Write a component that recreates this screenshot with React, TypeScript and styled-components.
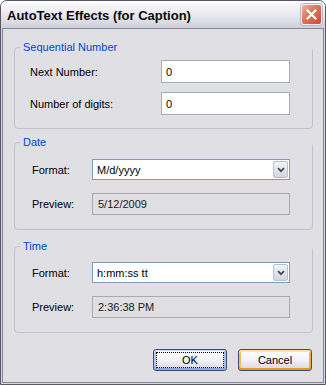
import styled, { createGlobalStyle } from "styled-components";

type GroupProps = {
  top: number;
};
type RowsProps = {
  padLeft: number;
  labelWidth: number;
  padTop: number;
  rowGap: number;
  padBottom: number;
};
type ButtonProps = {
  kind: "default" | "hot";
};

const GlobalStyle = createGlobalStyle`
  html, body {
    margin: 0;
    padding: 0;
    background: #ffffff;
  }
  body {
    font-family: "Liberation Sans", Arial, sans-serif;
    font-size: 11px;
  }
`;

const Window = styled.div`
  width: 326px;
  height: 385px;
  box-sizing: border-box;
  border: 1px solid #58586c;
  border-radius: 7px 7px 0 0;
  background: #d6d6e0;
  display: flex;
  flex-direction: column;
  overflow: hidden;
`;

const TitleBar = styled.div`
  height: 27px;
  flex-shrink: 0;
  display: flex;
  align-items: center;
  justify-content: space-between;
  padding: 0 3px 0 6px;
  background: linear-gradient(#fdfdfe 0%, #f1f1f5 30%, #e2e2ea 65%, #cfcfda 100%);
`;

const Title = styled.div`
  font-family: "Liberation Sans", Arial, sans-serif;
  font-weight: bold;
  font-size: 13px;
  color: #0a0a0a;
  padding-top: 2px;
`;

const CloseButton = styled.div`
  width: 21px;
  height: 21px;
  box-sizing: border-box;
  border: 1px solid #fbeeee;
  border-radius: 3px;
  background: linear-gradient(135deg, #f0b0a0 0%, #de7a62 40%, #c94a30 100%);
  box-shadow: 0 0 0 1px #b9b9c6;
  display: flex;
  align-items: center;
  justify-content: center;
`;

const Client = styled.div`
  flex: 1;
  margin: 0 1px 1px;
  border: 1px solid #84849a;
  background: #e0dfe3;
  padding: 18px 10px 0 11px;
  display: flex;
  flex-direction: column;
`;

const GroupBox = styled.div<GroupProps>`
  margin-top: ${({ top }) => top}px;
  border: 1px solid #c2c2ca;
  border-radius: 4px;
  display: flex;
  flex-direction: column;
`;

const GroupTitle = styled.div`
  display: table;
  margin: -7px 0 0 5px;
  padding: 0 3px;
  line-height: 13px;
  background: #e0dfe3;
  color: #0046d5;
`;

const Rows = styled.div<RowsProps>`
  display: grid;
  grid-template-columns: ${({ labelWidth }) => labelWidth}px 1fr;
  row-gap: ${({ rowGap }) => rowGap}px;
  padding: ${({ padTop }) => padTop}px 22px ${({ padBottom }) => padBottom}px
    ${({ padLeft }) => padLeft}px;
  align-items: center;
`;

const Label = styled.div`
  color: #000;
`;

const TextBox = styled.input`
  height: 23px;
  box-sizing: border-box;
  border: 1px solid #a5acb5;
  background: #ffffff;
  padding: 0 4px;
  margin: 0;
  font-family: "Liberation Sans", Arial, sans-serif;
  font-size: 11px;
  color: #000;
  outline: none;
  width: 100%;
`;

const Combo = styled.div`
  height: 21px;
  box-sizing: border-box;
  border: 1px solid #7f9db9;
  background: #ffffff;
  display: flex;
  align-items: center;
  padding-left: 4px;
  .text {
    flex: 1;
    color: #000;
  }
`;

const DropButton = styled.div`
  width: 15px;
  height: 17px;
  margin-right: 1px;
  box-sizing: border-box;
  border: 1px solid #bcc1cf;
  border-radius: 2px;
  background: linear-gradient(#f3f4f8, #d2d5e0);
  display: flex;
  align-items: center;
  justify-content: center;
`;

const Preview = styled.div`
  height: 22px;
  box-sizing: border-box;
  border: 1px solid #a9a9b0;
  background: #e0dfe3;
  padding-left: 5px;
  display: flex;
  align-items: center;
  color: #1a1a1a;
`;

const ButtonRow = styled.div`
  margin-top: 16px;
  padding-right: 1px;
  display: flex;
  justify-content: flex-end;
  gap: 11px;
`;

const Button = styled.button<ButtonProps>`
  width: 74px;
  height: 22px;
  box-sizing: border-box;
  margin: 0;
  padding: 0;
  border: 1px solid #3d4c72;
  border-radius: 3px;
  background: linear-gradient(#ffffff 0%, #f3f2f6 50%, #d8d6e2 100%);
  font-family: "Liberation Sans", Arial, sans-serif;
  font-size: 11px;
  color: #000;
  box-shadow: ${({ kind }) =>
    kind === "hot"
      ? "inset 0 2px 0 #ffe2a4, inset 0 -2px 0 #e89a10, inset 2px 0 0 #f6c052, inset -2px 0 0 #f0b032"
      : "inset 0 1px 0 #cfdcf6, inset 0 -2px 0 #8ea6dc, inset 2px 0 0 #b4c6ee, inset -2px 0 0 #a8bcea"};
  outline: ${({ kind }) => (kind === "default" ? "1px dotted #000" : "none")};
  outline-offset: -4px;
`;

const Chevron = () => (
  <svg width="8" height="6" viewBox="0 0 8 6">
    <path d="M1 1.2 L4 4.2 L7 1.2" fill="none" stroke="#4a4b5a" strokeWidth="1.8" />
  </svg>
);

const App = () => {
  return (
    <>
      <GlobalStyle />
      <Window>
        <TitleBar>
          <Title>AutoText Effects (for Caption)</Title>
          <CloseButton>
            <svg width="11" height="11" viewBox="0 0 11 11">
              <path d="M1.5 1.5 L9.5 9.5 M9.5 1.5 L1.5 9.5" stroke="#ffffff" strokeWidth="2.2" strokeLinecap="square" />
            </svg>
          </CloseButton>
        </TitleBar>
        <Client>
          <GroupBox top={0}>
            <GroupTitle>Sequential Number</GroupTitle>
            <Rows padLeft={15} labelWidth={131} padTop={6} rowGap={9} padBottom={13}>
              <Label>Next Number:</Label>
              <TextBox readOnly value="0" />
              <Label>Number of digits:</Label>
              <TextBox readOnly value="0" />
            </Rows>
          </GroupBox>
          <GroupBox top={13}>
            <GroupTitle>Date</GroupTitle>
            <Rows padLeft={17} labelWidth={60} padTop={10} rowGap={13} padBottom={14}>
              <Label>Format:</Label>
              <Combo>
                <span className="text">M/d/yyyy</span>
                <DropButton>
                  <Chevron />
                </DropButton>
              </Combo>
              <Label>Preview:</Label>
              <Preview>5/12/2009</Preview>
            </Rows>
          </GroupBox>
          <GroupBox top={16}>
            <GroupTitle>Time</GroupTitle>
            <Rows padLeft={17} labelWidth={60} padTop={9} rowGap={13} padBottom={14}>
              <Label>Format:</Label>
              <Combo>
                <span className="text">h:mm:ss tt</span>
                <DropButton>
                  <Chevron />
                </DropButton>
              </Combo>
              <Label>Preview:</Label>
              <Preview>2:36:38 PM</Preview>
            </Rows>
          </GroupBox>
          <ButtonRow>
            <Button kind="default">OK</Button>
            <Button kind="hot">Cancel</Button>
          </ButtonRow>
        </Client>
      </Window>
    </>
  );
};

export default App;
